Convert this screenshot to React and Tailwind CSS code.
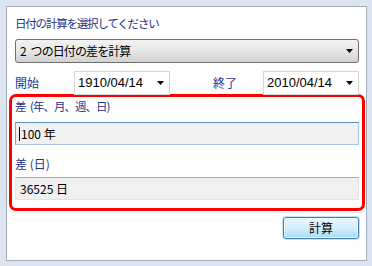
const font = { fontFamily: '"Noto Sans CJK JP", "Liberation Sans", sans-serif' }

function Arrow() {
  return (
    <svg width="7" height="4" viewBox="0 0 7 4" className="shrink-0">
      <path d="M0 0H7L3.5 4Z" fill="#000" />
    </svg>
  )
}

function DateBox({ value }) {
  return (
    <div className="flex h-[24px] w-[96px] items-center justify-between border border-[#d5d5d5] bg-white pl-[3px] pr-[5px] text-[13px] text-black">
      <span style={{ fontFamily: '"Liberation Sans", sans-serif' }}>{value}</span>
      <Arrow />
    </div>
  )
}

export default function App() {
  return (
    <div className="h-[266px] w-[372px] bg-[#dce5ef] pl-[6px] pt-[6px]" style={font}>
      <div className="h-[255px] w-[361px] border border-[#a3aebb] bg-white px-[8px] pr-[7px] pt-[8px] text-[12px] leading-[16px] text-[#1e1e1e]">
        <p className="text-[11.5px] tracking-[-1.2px] text-[#1e3287]">日付の計算を選択してください</p>

        <div className="mt-[8px] flex h-[24px] items-center justify-between rounded-[3px] border border-[#707070] bg-gradient-to-b from-[#f3f3f3] via-[#e6e6e6] to-[#d2d2d2] pl-[4px] pr-[5px] text-black">
          <span className="text-[12px] tracking-[-0.9px] [word-spacing:3px]">2 つの日付の差を計算</span>
          <Arrow />
        </div>

        <div className="mt-[8px] flex h-[24px] items-center">
          <span className="w-[59px] text-[#1e3287]">開始</span>
          <DateBox value="1910/04/14" />
          <span className="ml-[43px] w-[50px] text-[#1e3287]">終了</span>
          <DateBox value="2010/04/14" />
        </div>

        <div className="-mx-[6px] -mt-[1px] h-[117px] rounded-[7px] border-[3px] border-[#ff0000] px-[3px] pt-[1px]">
          <p className="text-[11.5px] tracking-[-1px] text-[#1e3287] [word-spacing:3px]">差 (年、月、週、日)</p>
          <div className="mt-[8px] flex h-[23px] items-center border border-[#a6c6e2] border-t-[#5b8fc1] border-l-[#7aa6d0] bg-[#f0f0f0] pl-[3px] text-black">
            <span className="mr-[1px] h-[14px] w-px bg-black" />
            <span>100 年</span>
          </div>
          <p className="mt-[11px] text-[#1e3287]">差 (日)</p>
          <div className="mt-[5px] flex h-[23px] items-center border border-[#e2e3ea] border-t-[#abadb3] bg-[#f0f0f0] pl-[4px] text-black">
            36525 日
          </div>
        </div>

        <div className="mt-[6px] flex justify-end">
          <button className="flex h-[22px] w-[76px] items-center justify-center rounded-[3px] border border-[#3c7fb1] bg-gradient-to-b from-[#eaf6fd] via-[#d5eefc] to-[#a7d9f5] text-black shadow-[0_0_0_1px_#c4e5f6,inset_0_0_0_1px_#f4fbff]">
            計算
          </button>
        </div>
      </div>
    </div>
  )
}
